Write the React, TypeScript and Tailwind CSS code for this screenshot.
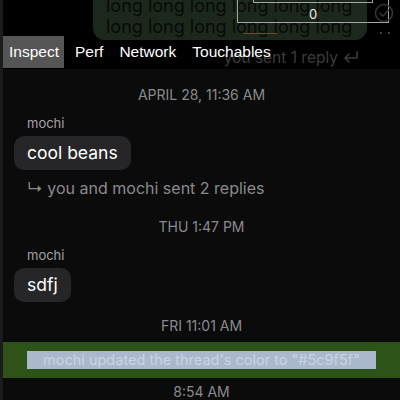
const font = { fontFamily: "Inter, 'Liberation Sans', sans-serif" };

function Stamp({ text }: { text: string }) {
  return <div className="text-center text-[14px] leading-4 text-[#8a8a8e]">{text}</div>;
}

function Bubble({ text }: { text: string }) {
  return (
    <div className="self-start ml-[11px] rounded-[10px] bg-[#262628] px-[13px] py-[6px] text-[17.5px] leading-[22px] text-white">
      {text}
    </div>
  );
}

export default function App() {
  return (
    <div className="relative w-[400px] h-[400px] overflow-hidden bg-[#0b0b0b] border-l-[3px] border-[#1c1c1c]" style={font}>
      {/* top: tail of the previous message, seen under the inspector */}
      <div className="relative h-[69px] bg-black">
        <div className="absolute left-[90px] top-[-14px] w-[274px] h-[54px] rounded-b-[12px] bg-[#1d281c] pl-[13px] pt-[9px] text-[18px] leading-[21px] text-[#080a08]">
          <div>long long long long long long</div>
          <div>long long long long long long</div>
        </div>
        <div className="absolute left-[234px] top-[-10px] w-[152px] h-[33px] border border-[#a6a6a6]">
          <div className="absolute left-[15px] top-0 w-[120px] h-[12px] border-b border-r border-l border-[#a6a6a6]" />
          <div className="absolute inset-x-0 top-[15px] text-center text-[13px] leading-4 text-[#e8e8e8]">0</div>
        </div>
        <svg className="absolute left-[371px] top-[3px]" width="20" height="20" viewBox="0 0 20 20" fill="none" stroke="#333" strokeWidth="1.6">
          <circle cx="10" cy="10" r="8.5" />
          <path d="M6 10.2l2.8 2.8L14.2 7.4" strokeLinecap="round" strokeLinejoin="round" />
        </svg>
        <div className="absolute left-[240px] top-[33px] w-[34px] h-[1px] bg-[#6b4a2a]" />
        <div className="absolute left-[377px] top-[32px] flex gap-[6px]">
          <span className="w-[2px] h-[2px] bg-[#444]" />
          <span className="w-[2px] h-[2px] bg-[#444]" />
        </div>
        <div className="absolute right-[40px] top-[48px] flex items-center gap-[4px] text-[15.5px] leading-[20px] text-[#3c3c3c]">
          you sent 1 reply
          <svg width="18" height="16" viewBox="0 0 18 16" fill="none" stroke="#3c3c3c" strokeWidth="1.6" strokeLinecap="round" strokeLinejoin="round">
            <path d="M15 2v6H3M7 4l-4 4 4 4" />
          </svg>
        </div>
        {/* inspector tabs */}
        <div className="absolute left-0 top-[36px] flex h-[32px] gap-[16px] text-[15.5px] text-white" style={{ fontFamily: "'Liberation Sans', sans-serif" }}>
          <div className="flex items-center pl-[6px] pr-[5px] bg-[#555555] mr-[-5px]">Inspect</div>
          <div className="flex items-center">Perf</div>
          <div className="flex items-center">Network</div>
          <div className="flex items-center">Touchables</div>
        </div>
      </div>

      <div className="flex flex-col">
        <div className="pt-[18px]"><Stamp text="APRIL 28, 11:36 AM" /></div>
        <div className="mt-[12px] ml-[24px] text-[13px] leading-4 text-[#a3a3a6]">mochi</div>
        <div className="mt-[5px] flex flex-col"><Bubble text="cool beans" /></div>
        <div className="mt-[8px] ml-[24px] text-[16px] leading-5 text-[#8a8a8e]">↳ you and mochi sent 2 replies</div>

        <div className="mt-[21px]"><Stamp text="THU 1:47 PM" /></div>
        <div className="mt-[12px] ml-[24px] text-[13px] leading-4 text-[#a3a3a6]">mochi</div>
        <div className="mt-[5px] flex flex-col"><Bubble text="sdfj" /></div>

        <div className="mt-[16px]"><Stamp text="FRI 11:01 AM" /></div>
        <div className="mt-[8px] h-[36px] bg-[#2d5319] flex items-center px-[24px]">
          <div className="w-full h-[18px] bg-[#a9b8cc] text-center text-[14.5px] leading-[18px] text-[#c9d4e3]">
            mochi updated the thread's color to "#5c9f5f"
          </div>
        </div>
        <div className="mt-[6px]"><Stamp text="8:54 AM" /></div>
      </div>
    </div>
  );
}
